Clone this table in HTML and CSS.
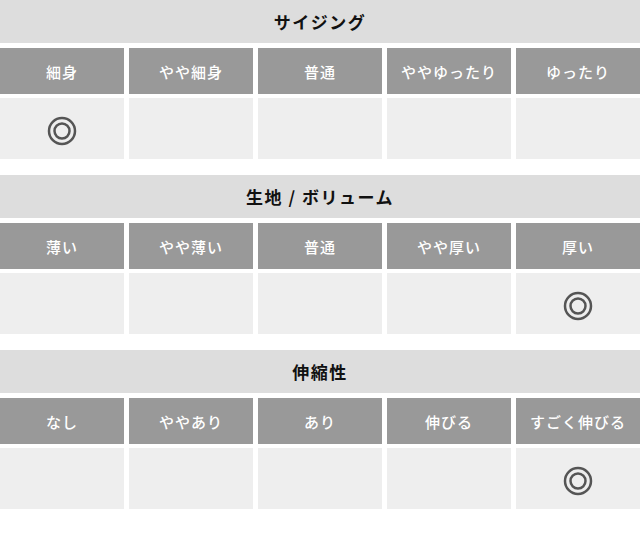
FILE: index.html
```html
<!DOCTYPE html>
<html lang="ja">
<head>
<meta charset="utf-8">
<link rel="stylesheet" href="styles.css">
</head>
<body>
<section class="spec">
  <h2 class="spec-title">サイジング</h2>
  <div class="spec-grid">
    <div class="head">細身</div>
    <div class="head">やや細身</div>
    <div class="head">普通</div>
    <div class="head">ややゆったり</div>
    <div class="head">ゆったり</div>
    <div class="cell"><svg class="mark" viewBox="0 0 30 30"><circle cx="15" cy="15" r="13" /><circle cx="15" cy="15" r="7.5" /></svg></div>
    <div class="cell"></div>
    <div class="cell"></div>
    <div class="cell"></div>
    <div class="cell"></div>
  </div>
</section>
<section class="spec">
  <h2 class="spec-title">生地 / ボリューム</h2>
  <div class="spec-grid">
    <div class="head">薄い</div>
    <div class="head">やや薄い</div>
    <div class="head">普通</div>
    <div class="head">やや厚い</div>
    <div class="head">厚い</div>
    <div class="cell"></div>
    <div class="cell"></div>
    <div class="cell"></div>
    <div class="cell"></div>
    <div class="cell"><svg class="mark" viewBox="0 0 30 30"><circle cx="15" cy="15" r="13" /><circle cx="15" cy="15" r="7.5" /></svg></div>
  </div>
</section>
<section class="spec">
  <h2 class="spec-title">伸縮性</h2>
  <div class="spec-grid">
    <div class="head">なし</div>
    <div class="head">ややあり</div>
    <div class="head">あり</div>
    <div class="head">伸びる</div>
    <div class="head">すごく伸びる</div>
    <div class="cell"></div>
    <div class="cell"></div>
    <div class="cell"></div>
    <div class="cell"></div>
    <div class="cell"><svg class="mark" viewBox="0 0 30 30"><circle cx="15" cy="15" r="13" /><circle cx="15" cy="15" r="7.5" /></svg></div>
  </div>
</section>
</body>
</html>
```
FILE: styles.css
```css
html, body {
  margin: 0;
  padding: 0;
  background: #ffffff;
}
body {
  font-family: "Noto Sans CJK JP", "Noto Sans", sans-serif;
  width: 640px;
}
.spec {
  display: flex;
  flex-direction: column;
  gap: 5px;
  margin-bottom: 16px;
}
.spec-title {
  margin: 0;
  height: 43px;
  background: #dddddd;
  color: #111111;
  font-size: 17px;
  font-weight: 700;
  letter-spacing: 1.5px;
  display: flex;
  align-items: center;
  justify-content: center;
}
.spec-grid {
  display: grid;
  grid-template-columns: repeat(5, 1fr);
  grid-template-rows: 46px 61px;
  gap: 4px 5px;
}
.head {
  background: #999999;
  color: #ffffff;
  font-size: 15px;
  font-weight: 500;
  letter-spacing: 1px;
  display: flex;
  align-items: center;
  justify-content: center;
}
.cell {
  background: #eeeeee;
  display: flex;
  align-items: center;
  justify-content: center;
}
.mark {
  width: 30px;
  height: 30px;
  margin-top: 4px;
  fill: none;
  stroke: #555555;
  stroke-width: 2.5;
}
```
